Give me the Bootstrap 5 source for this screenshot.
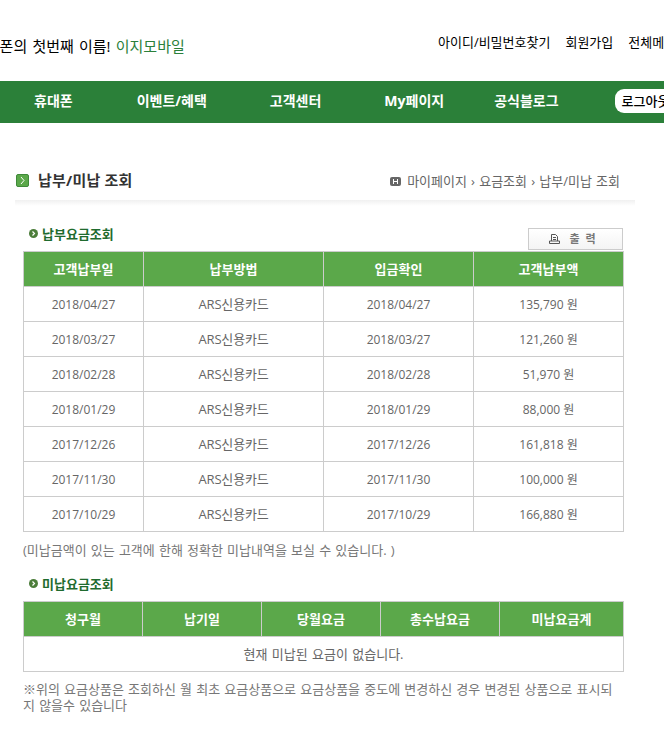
<!DOCTYPE html>
<html lang="ko">
<head>
    <meta charset="utf-8">
    <title>납부/미납 조회</title>
    <meta name="viewport" content="width=device-width, initial-scale=1">
    <link href="https://cdn.jsdelivr.net/npm/bootstrap@5.3.6/dist/css/bootstrap.min.css" rel="stylesheet">
    <style>
        html, body { overflow: hidden; }
        body { width: 664px; height: 736px; font-family: "Open Sans", "Noto Sans CJK KR", sans-serif; font-size: 13px; color: #666; }
        .top-bar { height: 81px; padding-top: 34px; color: #000; white-space: nowrap; }
        .slogan { flex: 0 0 466px; font-size: 15px; line-height: 20px; margin-left: -28px; margin-top: 2px; word-spacing: 1.300px; }
        .slogan em { font-style: normal; color: #2b803a; }
        .top-links { flex: none; gap: 15px; font-size: 13px; line-height: 17px; }
        .main-nav { height: 42px; background: #2b8039; padding-left: 34px; white-space: nowrap; }
        .main-nav a { color: #fff; font-size: 14px; font-weight: 700; text-decoration: none; line-height: 40px; }
        .main-nav .n1 { margin-right: 64px; }
        .main-nav .n2 { margin-right: 63px; }
        .main-nav .n3 { margin-right: 63px; }
        .main-nav .n4 { margin-right: 50px; }
        .main-nav .n5 { margin-right: 56px; }
        .main-nav .login-pill { background: #fff; color: #000; font-size: 13px; font-weight: 500; line-height: 24px; height: 24px; padding: 0 7px; border-radius: 9px; margin-top: 8px; }
        .page-head { width: 620px; height: 83px; margin-left: 15px; padding: 44px 15px 0 1px; background: linear-gradient(#f0f0f0, #fff) no-repeat bottom / 100% 6px; }
        .page-title { font-size: 15px; font-weight: 700; color: #333; line-height: 26px; margin: 0 0 0 9px; letter-spacing: .2px; }
        .head-mark { width: 13px; height: 13px; background: #5ba84a; border: 1px solid #3f8a3a; border-radius: 2px; margin-top: 7px; }
        .crumbs { margin-left: auto; margin-top: 1px; line-height: 26px; color: #666; word-spacing: .8px; }
        .crumbs svg { margin-right: 6px; }
        .content-box { width: 600px; margin-left: 23px; }
        .sec-head { height: 22px; padding-bottom: 13px; }
        .first-head { margin-top: 23px; }
        .second-head { margin-top: 20px; }
        .sec-title { font-size: 13px; font-weight: 700; color: #1f6b2e; margin: 0 0 0 4px; line-height: 18px; }
        .sec-dot { width: 9px; height: 9px; margin-left: 6px; }
        .print-btn { width: 95px; height: 22px; margin: -1px 0 0 auto; border: 1px solid #ccc; border-radius: 0; background: linear-gradient(#fff, #f4f4f4); color: #777; font-size: 11px; font-weight: 700; line-height: 18px; padding: 0; letter-spacing: 6px; }
        .print-btn svg { margin-right: 9px; }
        .pay-table { table-layout: fixed; width: 600px; margin: 0; border: 1px solid #ccc; }
        .pay-table th, .pay-table td { border: 1px solid #ccc; padding: 1px 0 0; text-align: center; vertical-align: middle; height: 35px; font-size: 12px; box-shadow: none; }
        .pay-table th { background: #5ba84a; color: #fff; font-weight: 700; font-size: 13px; }
        .pay-table td { color: #666; }
        .pay-table td.hangul-cell { font-size: 13px; word-spacing: 1px; }
        .pay-table td.ars-cell { letter-spacing: -.2px; }
        .note-line { line-height: 18px; margin: 9px 0 0; color: #777; word-spacing: .8px; }
        .foot-note { line-height: 16px; margin: 9px 0 0; color: #777; word-spacing: .8px; }
    </style>
</head>
<body>
    <div class="top-bar d-flex">
        <div class="slogan">알뜰폰의 첫번째 이름! <em>이지모바일</em></div>
        <div class="top-links d-flex">
            <span>아이디/비밀번호찾기</span>
            <span>회원가입</span>
            <span>전체메뉴</span>
        </div>
    </div>

    <nav class="main-nav d-flex">
        <a class="n1" href="#">휴대폰</a>
        <a class="n2" href="#">이벤트/혜택</a>
        <a class="n3" href="#">고객센터</a>
        <a class="n4" href="#">My페이지</a>
        <a class="n5" href="#">공식블로그</a>
        <a class="login-pill" href="#">로그아웃</a>
    </nav>

    <div class="page-head d-flex align-items-start">
        <span class="head-mark d-flex align-items-center justify-content-center">
            <svg width="7" height="9" viewBox="0 0 7 9"><path d="M2 1l3 3.500L2 8" fill="none" stroke="#fff" stroke-width="1"/></svg>
        </span>
        <h1 class="page-title">납부/미납 조회</h1>
        <div class="crumbs d-flex align-items-center">
            <svg width="11" height="9" viewBox="0 0 11 9"><rect width="11" height="9" rx="2" fill="#666"/><path d="M3.500 2v5M7.500 2v5M3.500 4.500h4" stroke="#fff" stroke-width="1"/></svg>
            마이페이지 › 요금조회 › 납부/미납 조회
        </div>
    </div>

    <div class="content-box">
        <div class="sec-head first-head d-flex align-items-center">
            <svg class="sec-dot" viewBox="0 0 9 9"><circle cx="4.500" cy="4.500" r="4.500" fill="#4c7d3a"/><path d="M3.500 2.500l2 2-2 2" fill="none" stroke="#fff" stroke-width="1.200"/></svg>
            <h2 class="sec-title">납부요금조회</h2>
            <button type="button" class="btn print-btn align-self-start d-flex align-items-center justify-content-center">
                <svg width="11" height="10" viewBox="0 0 11 10"><path d="M2.500 7V.5h4l2 2V7M.5 9.500h10V7h-10zM4 3.500h3M4 5.500h3" fill="none" stroke="#555"/></svg>
                출력
            </button>
        </div>
        <table class="table pay-table">
            <colgroup><col style="width:120px"><col style="width:180px"><col style="width:150px"><col style="width:150px"></colgroup>
            <thead>
                <tr><th>고객납부일</th><th>납부방법</th><th>입금확인</th><th>고객납부액</th></tr>
            </thead>
            <tbody id="payRows"></tbody>
        </table>
        <p class="note-line">(미납금액이 있는 고객에 한해 정확한 미납내역을 보실 수 있습니다. )</p>

        <div class="sec-head second-head d-flex align-items-center">
            <svg class="sec-dot" viewBox="0 0 9 9"><circle cx="4.500" cy="4.500" r="4.500" fill="#4c7d3a"/><path d="M3.500 2.500l2 2-2 2" fill="none" stroke="#fff" stroke-width="1.200"/></svg>
            <h2 class="sec-title">미납요금조회</h2>
        </div>
        <table class="table pay-table">
            <colgroup><col style="width:119px"><col style="width:119px"><col style="width:119px"><col style="width:119px"><col style="width:124px"></colgroup>
            <thead>
                <tr><th>청구월</th><th>납기일</th><th>당월요금</th><th>총수납요금</th><th>미납요금계</th></tr>
            </thead>
            <tbody>
                <tr><td class="hangul-cell" colspan="5">현재 미납된 요금이 없습니다.</td></tr>
            </tbody>
        </table>
        <p class="foot-note">※위의 요금상품은 조회하신 월 최초 요금상품으로 요금상품을 중도에 변경하신 경우 변경된 상품으로 표시되지 않을수 있습니다</p>
    </div>

    <script src="https://cdn.jsdelivr.net/npm/bootstrap@5.3.6/dist/js/bootstrap.bundle.min.js"></script>
    <script>
    const payments = [
        ["2018/04/27", "135,790 원"],
        ["2018/03/27", "121,260 원"],
        ["2018/02/28", "51,970 원"],
        ["2018/01/29", "88,000 원"],
        ["2017/12/26", "161,818 원"],
        ["2017/11/30", "100,000 원"],
        ["2017/10/29", "166,880 원"]
    ];
    document.getElementById("payRows").innerHTML = payments.map(p => `
        <tr><td>${p[0]}</td><td class="hangul-cell ars-cell">ARS신용카드</td><td>${p[0]}</td><td>${p[1]}</td></tr>
    `).join("");
    </script>
</body>
</html>
